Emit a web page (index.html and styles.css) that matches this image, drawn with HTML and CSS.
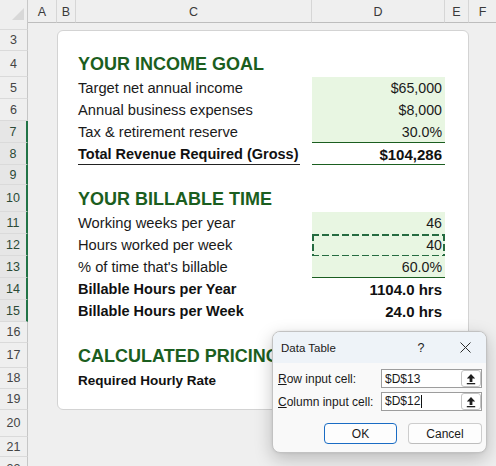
FILE: index.html
```html
<!DOCTYPE html>
<html>
<head>
<meta charset="utf-8">
<link rel="stylesheet" href="styles.css">
</head>
<body>
<div class="app">
  <div class="colhdr">
    <div class="ch corner"><svg width="14" height="14" viewBox="0 0 14 14"><polygon points="13,1 13,13 1,13" fill="#d8d8d8"/></svg></div>
    <div class="ch wa">A</div>
    <div class="ch wb">B</div>
    <div class="ch wc">C</div>
    <div class="ch wd">D</div>
    <div class="ch we">E</div>
    <div class="ch wf">F</div>
  </div>
  <div class="main">
    <div class="rowhdr">
      <div class="rh h7 clip-top"><span>2</span></div>
      <div class="rh h21">3</div>
      <div class="rh h26">4</div>
      <div class="rh h22">5</div>
      <div class="rh h22">6</div>
      <div class="rh h22 sel">7</div>
      <div class="rh h22 sel">8</div>
      <div class="rh h20 sel">9</div>
      <div class="rh h27 sel">10</div>
      <div class="rh h22 sel">11</div>
      <div class="rh h22 sel">12</div>
      <div class="rh h22 sel">13</div>
      <div class="rh h22 sel">14</div>
      <div class="rh h22 sel">15</div>
      <div class="rh h21">16</div>
      <div class="rh h25">17</div>
      <div class="rh h21">18</div>
      <div class="rh h21">19</div>
      <div class="rh h27">20</div>
      <div class="rh h20">21</div>
      <div class="rh h9 clip-bottom"><span>22</span></div>
    </div>
    <div class="sheet">
      <div class="card">
        <div class="row h20"></div>
        <div class="row h26"><div></div><div class="c hd">YOUR INCOME GOAL</div><div class="d"></div></div>
        <div class="row h22"><div></div><div class="c lbl">Target net annual income</div><div class="d val fill">$65,000</div></div>
        <div class="row h22"><div></div><div class="c lbl">Annual business expenses</div><div class="d val fill">$8,000</div></div>
        <div class="row h22"><div></div><div class="c lbl">Tax &amp; retirement reserve</div><div class="d val fill rule">30.0%</div></div>
        <div class="row h22"><div></div><div class="c bl uline">Total Revenue Required (Gross)</div><div class="d bv rule">$104,286</div></div>
        <div class="row h20"></div>
        <div class="row h27"><div></div><div class="c hd">YOUR BILLABLE TIME</div><div class="d"></div></div>
        <div class="row h22"><div></div><div class="c lbl">Working weeks per year</div><div class="d val fill">46</div></div>
        <div class="row h22"><div></div><div class="c lbl">Hours worked per week</div><div class="d val fill ants">40</div></div>
        <div class="row h22"><div></div><div class="c lbl">% of time that's billable</div><div class="d val fill rule">60.0%</div></div>
        <div class="row h22"><div></div><div class="c bl">Billable Hours per Year</div><div class="d bv">1104.0 hrs</div></div>
        <div class="row h22"><div></div><div class="c bl">Billable Hours per Week</div><div class="d bv">24.0 hrs</div></div>
        <div class="row h21"></div>
        <div class="row h25"><div></div><div class="c hd">CALCULATED PRICING</div><div class="d"></div></div>
        <div class="row h21"><div></div><div class="c bn">Required Hourly Rate</div><div class="d"></div></div>
        <div class="row h20"></div>
      </div>
    </div>
  </div>

  <div class="dlg">
    <div class="dlg-title">
      <span class="dlg-name">Data Table</span>
      <span class="dlg-help">?</span>
      <span class="dlg-close"><svg width="11" height="11" viewBox="0 0 11 11"><path d="M0.5 0.5 L10.5 10.5 M10.5 0.5 L0.5 10.5" stroke="#2b2b2b" stroke-width="1" fill="none"/></svg></span>
    </div>
    <div class="dlg-body">
      <div class="field">
        <span class="flabel"><u>R</u>ow input cell:</span>
        <div class="inp"><span>$D$13</span><span class="pick"><svg width="12" height="12" viewBox="0 0 12 12"><path d="M6 1 L10.2 5.6 H7.4 V9 H4.6 V5.6 H1.8 Z" fill="#1f1f1f"/><rect x="1.8" y="10" width="8.4" height="1.3" fill="#1f1f1f"/></svg></span></div>
      </div>
      <div class="field">
        <span class="flabel"><u>C</u>olumn input cell:</span>
        <div class="inp"><span class="caret">$D$12</span><span class="pick"><svg width="12" height="12" viewBox="0 0 12 12"><path d="M6 1 L10.2 5.6 H7.4 V9 H4.6 V5.6 H1.8 Z" fill="#1f1f1f"/><rect x="1.8" y="10" width="8.4" height="1.3" fill="#1f1f1f"/></svg></span></div>
      </div>
      <div class="btns">
        <span class="btn ok">OK</span>
        <span class="btn cancel">Cancel</span>
      </div>
    </div>
  </div>
</div>
</body>
</html>
```
FILE: styles.css
```css
html, body {
  margin: 0;
  padding: 0;
  background: #efefef;
}
.app {
  width: 496px;
  height: 466px;
  position: relative;
  overflow: hidden;
  background: #efefef;
  font-family: "Liberation Sans", Arial, sans-serif;
  color: #1a1a1a;
}
.colhdr {
  display: flex;
  height: 23px;
}
.ch {
  box-sizing: border-box;
  height: 23px;
  flex: none;
  border-right: 1px solid #d6d6d6;
  border-bottom: 1px solid #bdbdbd;
  display: flex;
  align-items: center;
  justify-content: center;
  padding-top: 2px;
  font-size: 12.5px;
  color: #3a3a3a;
}
.corner {
  width: 28px;
  border-bottom: none;
  border-right: 1px solid #c8c8c8;
  align-items: flex-end;
  justify-content: flex-end;
  padding: 0 2px 2px 0;
}
.corner svg { display: block; }
.wa { width: 29px; }
.wb { width: 19px; }
.wc { width: 236px; }
.wd { width: 133px; }
.we { width: 24px; }
.wf { width: 27px; border-right: none; }

.main {
  display: flex;
  height: 443px;
}
.rowhdr {
  width: 28px;
  flex: none;
  display: flex;
  flex-direction: column;
}
.rh {
  box-sizing: border-box;
  flex: none;
  border-bottom: 1px solid #dadada;
  border-right: 1px solid #c6c6c6;
  display: flex;
  align-items: center;
  justify-content: center;
  font-size: 12.5px;
  color: #444;
  overflow: hidden;
}
.rh.sel {
  background: #e6e6e6;
  border-right: 2px solid #217346;
  color: #2b4a36;
}
.clip-top { align-items: flex-end; }
.clip-top span { flex: none; height: 22px; line-height: 22px; }
.clip-bottom { align-items: flex-start; border-bottom: none; }
.clip-bottom span { flex: none; height: 22px; line-height: 22px; padding-top: 1px; }

.h7 { height: 7px; }
.h9 { height: 9px; }
.h20 { height: 20px; }
.h21 { height: 21px; }
.h22 { height: 22px; }
.h25 { height: 25px; }
.h26 { height: 26px; }
.h27 { height: 27px; }

.sheet {
  flex: 1;
  padding: 7px 0 0 29px;
}
.card {
  box-sizing: border-box;
  width: 412px;
  height: 380px;
  background: #fff;
  border: 1px solid #d3d3d3;
  border-radius: 6px;
}
.row {
  display: grid;
  grid-template-columns: 18px 236px 133px;
}
.c {
  padding-left: 2px;
  display: flex;
  align-items: center;
  white-space: nowrap;
}
.d {
  box-sizing: border-box;
  padding-right: 3px;
  display: flex;
  align-items: center;
  justify-content: flex-end;
  white-space: nowrap;
  position: relative;
}
.hd {
  font-size: 18px;
  font-weight: bold;
  color: #1b5e20;
  padding-top: 1px;
}
.lbl {
  font-size: 14.7px;
  color: #1a1a1a;
}
.bl {
  font-size: 14.5px;
  font-weight: bold;
  color: #111;
}
.bn {
  font-size: 13.5px;
  font-weight: bold;
  color: #111;
  padding-top: 3px;
}
.val {
  font-size: 14.2px;
  color: #1a1a1a;
}
.bv {
  font-size: 15px;
  font-weight: bold;
  color: #111;
}
.fill {
  background-color: #e8f6e2;
}
.rule {
  box-shadow: inset 0 -1px 0 #1b5e20;
}
.uline {
  background: linear-gradient(#222, #222) no-repeat left 2px bottom 0 / 222px 1px;
}
.ants::after {
  content: "";
  position: absolute;
  left: 0;
  top: 0;
  right: 0;
  bottom: -1px;
  background:
    repeating-linear-gradient(90deg, #256b40 0 7px, transparent 7px 10px) left top / 100% 2px no-repeat,
    repeating-linear-gradient(90deg, #256b40 0 7px, transparent 7px 10px) left bottom / 100% 2px no-repeat,
    repeating-linear-gradient(180deg, #256b40 0 7px, transparent 7px 10px) left top / 2px 100% no-repeat,
    repeating-linear-gradient(180deg, #256b40 0 7px, transparent 7px 10px) right top / 2px 100% no-repeat;
}

/* dialog */
.dlg {
  position: absolute;
  left: 272px;
  top: 331px;
  width: 215px;
  height: 122px;
  box-sizing: border-box;
  border: 1px solid #c2c2c2;
  border-radius: 8px;
  background: #f9f9f9;
  box-shadow: 0 6px 18px rgba(0, 0, 0, 0.22), 0 0 3px rgba(0, 0, 0, 0.08);
  overflow: hidden;
  font-size: 12px;
  color: #1a1a1a;
}
.dlg-title {
  height: 31px;
  background: #eef3f8;
  display: flex;
  align-items: center;
}
.dlg-name {
  flex: 1;
  padding-left: 8px;
  font-size: 11.5px;
}
.dlg-help {
  width: 46px;
  text-align: center;
  font-size: 12.5px;
}
.dlg-close {
  width: 42px;
  display: flex;
  justify-content: center;
}
.dlg-close svg { display: block; }
.dlg-body {
  padding: 6px 4px 0 5px;
  display: flex;
  flex-direction: column;
  gap: 4px;
}
.field {
  display: flex;
  align-items: center;
  justify-content: space-between;
  height: 19px;
}
.flabel u { text-decoration: underline; text-underline-offset: 1px; }
.inp {
  box-sizing: border-box;
  width: 101px;
  height: 19px;
  border: 1px solid #9d9d9d;
  background: #fff;
  display: flex;
  align-items: center;
  padding-left: 3px;
  font-size: 12px;
}
.caret {
  border-right: 1px solid #111;
  padding-right: 1px;
  line-height: 13px;
}
.pick {
  margin-left: auto;
  box-sizing: border-box;
  width: 20px;
  height: 17px;
  border: 1px solid #c4c4c4;
  border-radius: 3px;
  background: #fff;
  display: flex;
  align-items: center;
  justify-content: center;
}
.pick svg { display: block; }
.btns {
  display: flex;
  justify-content: flex-end;
  gap: 11px;
  margin-top: 8px;
}
.btn {
  box-sizing: border-box;
  height: 21px;
  border: 1px solid #cdcdcd;
  border-bottom-color: #bdbdbd;
  border-radius: 4px;
  background: #fdfdfd;
  display: flex;
  align-items: center;
  justify-content: center;
  font-size: 12px;
}
.ok {
  width: 73px;
  border-color: #1a6cc4;
}
.cancel {
  width: 74px;
}
```
